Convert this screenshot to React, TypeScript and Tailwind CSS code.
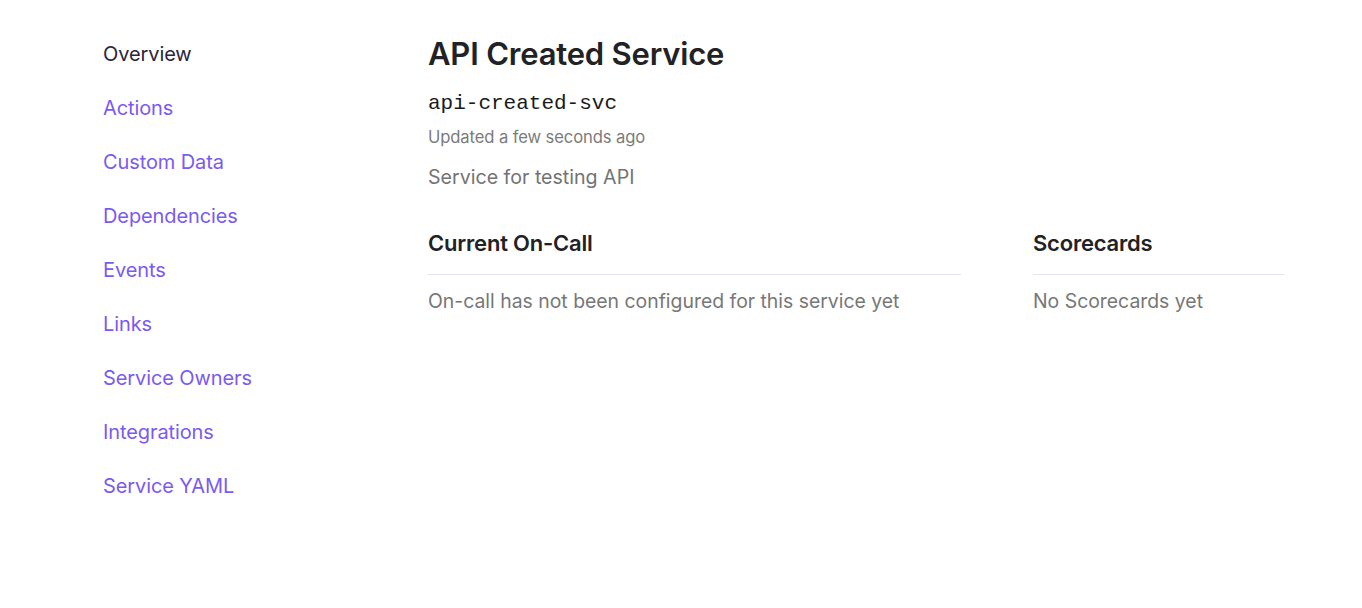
import React from "react";

const nav = [
  "Overview",
  "Actions",
  "Custom Data",
  "Dependencies",
  "Events",
  "Links",
  "Service Owners",
  "Integrations",
  "Service YAML",
];

export default function App() {
  return (
    <div
      className="w-[1362px] h-[608px] bg-white flex overflow-hidden"
      style={{ fontFamily: "Inter, 'Noto Sans', sans-serif" }}
    >
      <nav className="w-[428px] pl-[103px] pt-[27px] flex flex-col">
        {nav.map((n, i) => (
          <a
            key={n}
            className={`h-[54px] leading-[54px] text-[20px] tracking-[-0.1px] ${
              i === 0 ? "text-[#2a2540]" : "text-[#7a5af0]"
            }`}
          >
            {n}
          </a>
        ))}
      </nav>
      <main className="w-[856px] flex flex-col">
        <h1 className="mt-[36px] text-[31px] leading-[36px] font-semibold text-[#222225] tracking-[-0.2px]">
          API Created Service
        </h1>
        <div
          className="mt-[18px] text-[21px] leading-[28px] text-[#1a1a1a]"
          style={{ fontFamily: "'Liberation Mono', monospace" }}
        >
          api-created-svc
        </div>
        <div className="mt-[7px] text-[16.6px] leading-[24px] text-[#7b7b7b] tracking-[-0.1px]">
          Updated a few seconds ago
        </div>
        <div className="mt-[14px] text-[19.6px] leading-[28px] text-[#737373]">
          Service for testing API
        </div>
        <div className="mt-[38px] flex gap-[72px]">
          <section className="w-[533px]">
            <h2 className="text-[22px] leading-[28px] font-semibold text-[#222225] pb-[17px] border-b border-[#e2e6ec] tracking-[-0.2px]">
              Current On-Call
            </h2>
            <p className="mt-[12px] text-[19.4px] leading-[28px] text-[#777777]">
              On-call has not been configured for this service yet
            </p>
          </section>
          <section className="w-[251px]">
            <h2 className="text-[22px] leading-[28px] font-semibold text-[#222225] pb-[17px] border-b border-[#e2e6ec] tracking-[-0.2px]">
              Scorecards
            </h2>
            <p className="mt-[12px] text-[19.4px] leading-[28px] text-[#777777]">
              No Scorecards yet
            </p>
          </section>
        </div>
      </main>
    </div>
  );
}
